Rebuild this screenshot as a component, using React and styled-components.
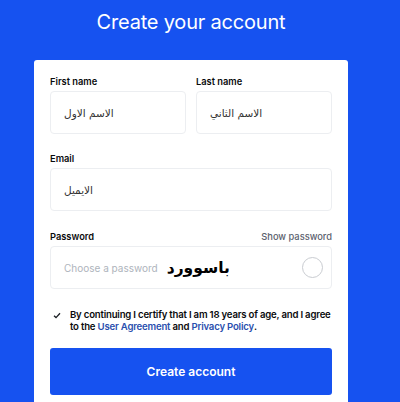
import React from "react";
import styled, { createGlobalStyle } from "styled-components";

const Global = createGlobalStyle`
  html, body { margin: 0; padding: 0; }
  body {
    background: #1652f0;
    font-family: Inter, "Liberation Sans", "DejaVu Sans", sans-serif;
    overflow: hidden;
  }
`;

const Page = styled.div`
  width: 314px;
  margin-left: 34px;
  height: 402px;
  display: flex;
  flex-direction: column;
`;

const Title = styled.h1`
  margin: 0;
  height: 60px;
  padding-top: 9px;
  box-sizing: border-box;
  text-align: center;
  color: #fff;
  font-size: 20px;
  letter-spacing: -0.2px;
  line-height: 26px;
  font-weight: 400;
`;

const Card = styled.div`
  flex: 1;
  background: #fff;
  border-radius: 3px 3px 0 0;
  padding: 14px 16px 0;
  display: flex;
  flex-direction: column;
`;

const Row = styled.div`
  display: grid;
  grid-template-columns: 1fr 1fr;
  gap: 10px;
`;

const Field = styled.div`
  display: flex;
  flex-direction: column;
  margin-top: ${(p) => p.$top || 0}px;
`;

const LabelRow = styled.div`
  display: flex;
  justify-content: space-between;
  align-items: center;
  height: 14px;
  margin-bottom: 3px;
`;

const Label = styled.label`
  font-size: 9.3px;
  font-weight: 600;
  color: #0a0b0d;
`;

const Hint = styled.span`
  font-size: 9.3px;
  font-weight: 500;
  color: #5b616e;
`;

const Input = styled.div`
  height: 43px;
  box-sizing: border-box;
  border: 1px solid #eceef1;
  border-radius: 4px;
  display: flex;
  align-items: center;
  padding: 0 13px;
  gap: 9px;
`;

const Value = styled.span`
  font-family: "DejaVu Sans", sans-serif;
  font-size: 10.5px;
  color: #333;
  direction: rtl;
`;

const Placeholder = styled.span`
  font-size: 10px;
  color: #aeb4bc;
`;

const BigArabic = styled.span`
  font-family: "DejaVu Sans", sans-serif;
  font-size: 15.5px;
  font-weight: 700;
  color: #000;
  direction: rtl;
`;

const Radio = styled.span`
  margin-left: auto;
  width: 19px;
  height: 19px;
  border-radius: 50%;
  border: 1px solid #c9ccd1;
  margin-right: -5px;
`;

const Agree = styled.div`
  display: flex;
  align-items: flex-start;
  gap: 9px;
  margin-top: 20px;
  padding-left: 3px;
`;

const Check = styled.svg`
  flex: none;
  margin-top: 3px;
`;

const AgreeText = styled.p`
  margin: 0;
  font-size: 9.6px;
  letter-spacing: -0.2px;
  line-height: 12px;
  font-weight: 600;
  color: #0a0b0d;
`;

const Link = styled.a`
  display: inline-block;
  color: #2a4fae;
  text-decoration: none;
`;

const Button = styled.button`
  margin-top: 15px;
  height: 47px;
  border: none;
  border-radius: 3px;
  background: #1652f0;
  color: #fff;
  font-family: inherit;
  font-size: 12px;
  font-weight: 600;
`;

export default function App() {
  return (
    <>
      <Global />
      <Page>
        <Title>Create your account</Title>
        <Card>
          <Row>
            <Field>
              <LabelRow><Label>First name</Label></LabelRow>
              <Input><Value>الاسم الاول</Value></Input>
            </Field>
            <Field>
              <LabelRow><Label>Last name</Label></LabelRow>
              <Input><Value>الاسم  الثاني</Value></Input>
            </Field>
          </Row>
          <Field $top={17}>
            <LabelRow><Label>Email</Label></LabelRow>
            <Input><Value>الايميل</Value></Input>
          </Field>
          <Field $top={18}>
            <LabelRow>
              <Label>Password</Label>
              <Hint>Show password</Hint>
            </LabelRow>
            <Input>
              <Placeholder>Choose a password</Placeholder>
              <BigArabic>باسوورد</BigArabic>
              <Radio />
            </Input>
          </Field>
          <Agree>
            <Check width="8" height="7" viewBox="0 0 8 7">
              <path d="M1 3.8 L3 5.6 L7 1.2" fill="none" stroke="#1b1f24" strokeWidth="1.3" />
            </Check>
            <AgreeText>
              By continuing I certify that I am 18 years of age, and I agree to the{" "}
              <Link>User Agreement</Link> and <Link>Privacy Policy</Link>.
            </AgreeText>
          </Agree>
          <Button>Create account</Button>
        </Card>
      </Page>
    </>
  );
}
